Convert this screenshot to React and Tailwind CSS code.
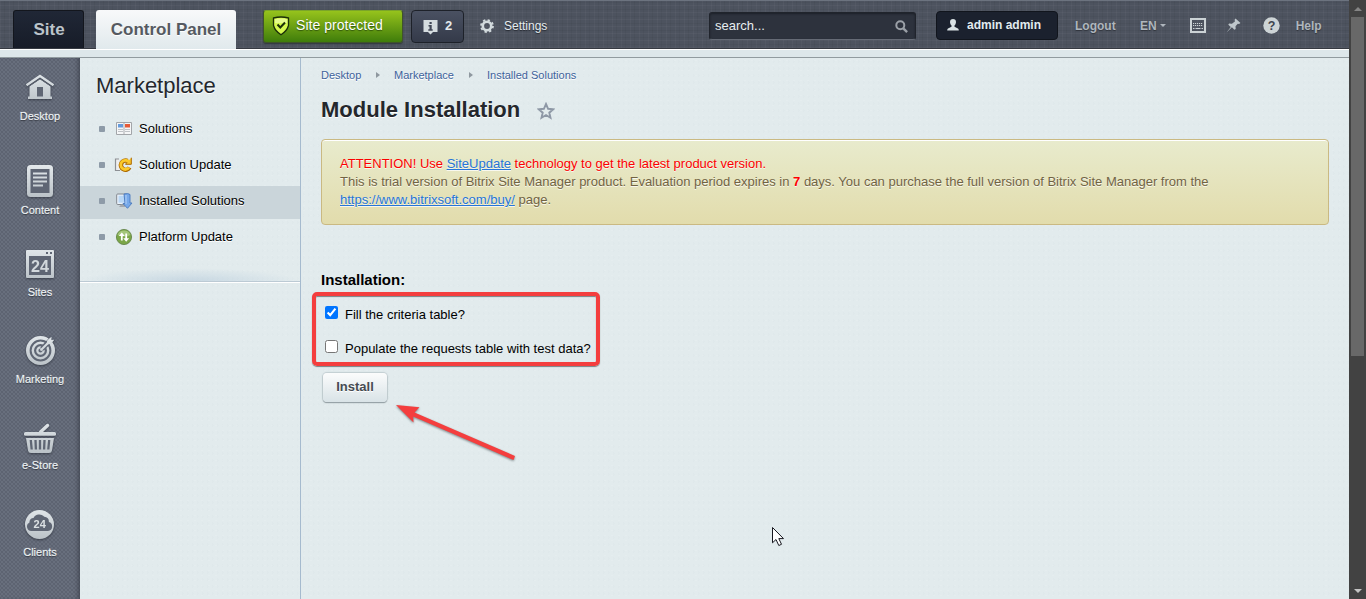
import React from 'react';

const Defs = () => (
  <defs>
    <linearGradient id="metal" x1="0" y1="0" x2="0" y2="40" gradientUnits="userSpaceOnUse">
      <stop offset="0" stopColor="#e6ebee" />
      <stop offset="1" stopColor="#b3bbc1" />
    </linearGradient>
  </defs>
);

const M = 'url(#metal)';
const D = '#5f6674';

const icons = {
  Desktop: (
    <>
      <path d="M6.500 16.200L20 7l13.500 9.200" fill="none" stroke={M} strokeWidth="2.500" />
      <path d="M9.500 17.300L20 10.200l10.500 7.100V27.500H32V30H8v-2.500h1.500z" fill={M} />
      <path d="M8.500 17.600L20 9.700l11.500 7.900" fill="none" stroke={D} strokeWidth="1" />
      <path d="M17 18h6v9.500h-6z" fill={D} />
    </>
  ),
  Content: (
    <>
      <rect x="7" y="2" width="26" height="32" rx="3.500" fill={M} />
      <rect x="10.500" y="6" width="19" height="24" fill={D} />
      <path d="M13 10.500h14M13 14.500h14M13 18.500h14M13 22.500h10" stroke={M} strokeWidth="2" />
    </>
  ),
  Sites: (
    <>
      <rect x="6" y="5" width="28" height="28" rx="1" fill={M} />
      <rect x="9" y="11" width="22" height="19" fill={D} />
      <path d="M26 7h2v2h-2zM30 7h2v2h-2z" fill={D} />
      <text x="20" y="27" textAnchor="middle" fontFamily="Liberation Sans, sans-serif" fontWeight="700" fontSize="17" textLength="18" lengthAdjust="spacingAndGlyphs" fill="#d2d8dc">24</text>
    </>
  ),
  Marketing: (
    <>
      <circle cx="20.500" cy="18.500" r="12.700" fill={D} stroke={M} strokeWidth="3.600" />
      <circle cx="20.500" cy="18.500" r="7.700" fill="none" stroke={M} strokeWidth="2.400" />
      <circle cx="20.500" cy="18.500" r="3.200" fill="none" stroke={M} strokeWidth="2.200" />
      <path d="M22 17L33 5.500" stroke={D} strokeWidth="5" />
      <path d="M20.500 18.500L30 9" stroke={M} strokeWidth="2.200" />
      <path d="M26.500 12.500l.8-4.300L31.500 4.700l-.2 3.200 3-.2-3.500 4.200z" fill={M} />
    </>
  ),
  'e-Store': (
    <>
      <path d="M20.500 14L27.500 7.500" stroke={M} strokeWidth="3.400" strokeLinecap="round" />
      <rect x="4" y="14" width="32" height="3.800" rx="1.500" fill={M} />
      <path d="M6 20h28l-2 12.500q-.4 2.500-3 2.500H11q-2.600 0-3-2.500z" fill={M} />
      <path d="M10.800 22l.9 9.500M15.500 22l.4 9.500M20 22v9.500M24.500 22l-.4 9.500M29.200 22l-.9 9.500" stroke={D} strokeWidth="2.300" />
    </>
  ),
  Clients: (
    <>
      <circle cx="19.500" cy="19.500" r="14.500" fill={M} />
      <path d="M12 26a4.500 4.500 0 0 1-2.500-8.500A4 4 0 0 1 13.500 13a6.500 6.500 0 0 1 10.800-1.200 4.500 4.500 0 0 1 4.500 5.200A4.600 4.600 0 0 1 28 26z" fill={D} />
      <text x="19.700" y="23.300" textAnchor="middle" fontFamily="Liberation Sans, sans-serif" fontWeight="700" fontSize="11" fill="#dce1e4">24</text>
    </>
  ),
};

const Nav = ({ name, gap }) => (
  <div className={`flex flex-col items-center ${gap}`}>
    <svg width="40" height="40" className="drop-shadow-[0_1px_1px_rgba(30,35,45,0.6)]">{icons[name]}</svg>
    <span className="text-[11px] leading-[14px] text-[#edf2f4] [text-shadow:0_1px_1px_#30343d,0_0_1px_#dfe5e8]">{name}</span>
  </div>
);

const menuIcons = {
  Solutions: (
    <>
      <path d="M.5 1.500h15v12H.5z" fill="#f5f6f7" stroke="#a2a5a9" />
      <path d="M2 3h5v3.500H2z" fill="#659bdc" />
      <path d="M9 3h5v3.500H9z" fill="#e55a38" />
      <path d="M2 8.500h5M2 10.500h5M9 8.500h5M9 10.500h5" stroke="#bfc2c6" />
      <path d="M8 2v11" stroke="#a9acb0" />
    </>
  ),
  'Solution Update': (
    <>
      <path d="M3 2H-.5v11.500H4" fill="#eee" stroke="#8d9094" strokeWidth="1.200" />
      <path d="M13.500 10.500A4.600 4.600 0 1 1 11.500 4" fill="none" stroke="#ad6900" strokeWidth="4.400" />
      <path d="M15.300.7v6.600H9.500l1.800-2.200" fill="#f9c52c" stroke="#ad6900" strokeWidth="1" />
      <path d="M13 10.700A4.600 4.600 0 1 1 12.500 4.500" fill="none" stroke="#fbc928" strokeWidth="2.800" />
    </>
  ),
  'Installed Solutions': (
    <>
      <rect x=".7" y="1" width="10.500" height="10.500" rx="1" fill="#e9f1fa" stroke="#83888e" />
      <rect x="2.500" y="2.700" width="7" height="7" fill="#b9d7f5" />
      <path d="M3 14l2-2.500h4V14z" fill="#a4a8ad" />
      <path d="M8 1q4.500-1 6 .5V10h2l-4.500 5.300L7 10.500h2z" fill="#77a9ea" stroke="#4878bd" strokeWidth=".9" />
      <path d="M10 2v9" stroke="#b6d3f7" />
    </>
  ),
  'Platform Update': (
    <>
      <circle cx="8" cy="8" r="7.600" fill="#7ba648" stroke="#5e7f42" strokeWidth=".8" />
      <path d="M1.500 6a7 7 0 0 1 13 0q-6 3-13 0" fill="#a4c67b" />
      <path d="M5.800 11.500V5.500M10.200 4.500V10.500" stroke="#fff" strokeWidth="1.800" />
      <path d="M2.800 7l3-3.500 3 3.500zM7.200 9.200l3 3.500 3-3.500z" fill="#fff" />
    </>
  ),
};

const MenuRow = ({ name, active }) => (
  <div className={`flex h-[33px] mb-[3px] items-center pl-[19px] pb-[3px] ${active ? 'bg-[#cad5da]' : ''}`}>
    <i className="-mt-px size-[6px] rounded-[1px] bg-[#8e9ba8]" />
    <svg width="16" height="16" className="ml-[11px] overflow-visible">{menuIcons[name]}</svg>
    <span className="ml-[7px] text-[13px] leading-4 text-black [text-shadow:0_1px_0_#fff]">{name}</span>
  </div>
);

const Crumb = ({ className }) => <i className={`border-y-[3.500px] border-l-[4px] border-y-transparent border-l-[#8f989f] ${className}`} />;

const Header = () => (
  <header className="flex h-[49px] shrink-0 border-t border-[#6c737f] border-b border-b-[#363a42] bg-[#4d535f] bg-[repeating-linear-gradient(0deg,rgba(255,255,255,0.03)_0_1px,transparent_1px_3px,rgba(0,0,0,0.04)_3px_4px,transparent_4px_7px),repeating-linear-gradient(90deg,rgba(255,255,255,0.03)_0_1px,transparent_1px_4px,rgba(0,0,0,0.04)_4px_5px,transparent_5px_9px)]">
    <div className="ml-[13px] mt-[9px] flex h-[38px] w-[71px] justify-center rounded-t-[3px] border border-b-0 border-[#13161d] bg-linear-to-b from-[#202736] to-[#171c28] pt-[8px] pl-px text-[17px] leading-[22px] font-bold text-[#bcc4ca]">Site</div>
    <div className="ml-3 mt-[9px] flex h-[40px] w-[140px] justify-center rounded-t-[3px] bg-linear-to-b from-[#f8f9fa] to-[#e0e9ec] pt-[9px] text-[17px] leading-[22px] font-bold text-[#555a61] [text-shadow:0_1px_0_#fff]">Control Panel</div>
    <div className="ml-[27px] mt-[9px] flex h-[33px] w-[140px] rounded-[3px] border border-[#40542a] border-t-[#7ba529] bg-linear-to-b from-[#96c31c] to-[#3f7d0b] shadow-[0_1px_1px_#343a40]">
      <svg width="18" height="20" className="ml-2 mt-[5px]" viewBox="0 0 18 20"><path d="M1.500 2Q9 0 16.500 2v7.500Q15 15 9 18.700 3 15 1.500 9.500z" fill="#d5f850" stroke="#1b2f09" strokeWidth="1.300" /><path d="M3 3.200Q9 1.800 15 3.200V7H3z" fill="#effbb5" opacity=".6" /><path d="M5.500 8.500l2.800 3 4.700-5" fill="none" stroke="#1b2f09" strokeWidth="2" /></svg>
      <span className="ml-[6px] mt-[5px] text-[14px] leading-[18px] text-white tracking-[0.04px] [text-shadow:0_1px_1px_#31570a]">Site protected</span>
    </div>
    <div className="ml-2 mt-[9px] flex h-[33px] w-[53px] rounded-[4px] border border-[#1d2129] bg-linear-to-b from-[#4a5162] to-[#343a49]">
      <svg width="15" height="15" className="ml-[11px] mt-[9px]"><path d="M.5 0h14v12H10l-2.500 2.500L5 12H.5z" fill="#d5dcdf" /><path d="M6.500 2h2.200v2H6.500zM5.500 5h3.200v4.200h1v1.500H5.300V9.200h1.200V6.500h-1z" fill="#414756" /></svg>
      <b className="ml-[7px] mt-[7px] text-[13px] leading-4 text-[#e4eaed]">2</b>
    </div>
    <svg width="14" height="14" viewBox="0 0 14 14" className="ml-4 mt-[18px]"><circle cx="7" cy="7" r="4.200" fill="none" stroke="#d2dadd" strokeWidth="2.600" /><circle cx="7" cy="7" r="6" fill="none" stroke="#d2dadd" strokeWidth="1.800" strokeDasharray="2.350" /></svg>
    <span className="ml-[10px] mt-[17px] text-[12px] leading-4 text-[#e6edf0] [text-shadow:0_1px_1px_#252830]">Settings</span>
    <div className="ml-auto mt-[11px] flex h-[28px] w-[207px] justify-between rounded-[3px] border border-[#20242c] border-b-[#656a75] bg-[#2d323d] px-[5px] shadow-[inset_0_1px_2px_#1c2028]">
      <span className="mt-[5px] text-[13px] leading-4 text-[#e7edf0]">search...</span>
      <svg width="13" height="13" viewBox="0 0 13 13" className="mr-[2px] mt-[7px]"><circle cx="5.300" cy="5.300" r="4" fill="none" stroke="#9ba0a7" strokeWidth="2" /><path d="M8.300 8.300l3.800 3.800" stroke="#9ba0a7" strokeWidth="2.400" /></svg>
    </div>
    <div className="ml-5 mt-[10px] flex h-[29px] w-[122px] rounded-[4px] border border-[#11151d] bg-[#1b212e]">
      <svg width="12" height="12" viewBox="0 0 12 12" className="ml-[10px] mt-[7px]"><path d="M6 0q3 0 3 3.200Q8.800 5.500 7.500 6.500v1.300L11 9.500q.8.500.8 2H.2Q.2 10 1 9.500l3.500-1.700V6.500Q3.200 5.500 3 3.200 3 0 6 0" fill="#d9e1e4" /></svg>
      <b className="ml-[8px] mt-[5px] text-[12px] leading-4 text-[#e2ebef]">admin admin</b>
    </div>
    <div className="flex w-[291px] pt-[17px] text-[12px] leading-4 font-bold text-[#afb6bd] [text-shadow:0_1px_1px_#30343c]">
      <span className="ml-[17px] w-[65px]">Logout</span>
      <span>EN</span>
      <i className="ml-[3px] mt-[6px] h-[3px] border-x-[3px] border-t-[3px] border-x-transparent border-t-[#afb6bd]" />
      <svg width="16" height="15" className="ml-[24px]"><path d="M1 1h14v13H1z" fill="none" stroke="#cbd2d5" strokeWidth="2" /><path d="M3 5.500h10M3 7.500h10" stroke="#cbd2d5" strokeDasharray="1.200 .8" strokeWidth="1" /><path d="M3 10.500h1.500M5.500 10.500h5M11.500 10.500H13" stroke="#cbd2d5" strokeWidth="1.200" /></svg>
      <svg width="15" height="15" viewBox="0 0 15 15" className="ml-[20px]"><path d="M9.500.5l5 4.500-1.500 1-1.200-.3-2.300 2.600.2 2.800-1.300.7-2.500-2.500L.5 14.500 4.800 9 2.300 6.800 3 5.500l2.900.2 3-2.300-.3-1.600z" fill="#bec6cb" /></svg>
      <svg width="17" height="17" className="ml-[22px] -mt-px"><circle cx="8.500" cy="8.500" r="8.200" fill="#cdd4d6" /><text x="8.500" y="13" textAnchor="middle" fontSize="12.500" fontWeight="700" fill="#3e444f" className="[text-shadow:none]">?</text></svg>
      <span className="ml-[16px]">Help</span>
    </div>
  </header>
);

const Texture = 'bg-[#e2ebed] bg-[radial-gradient(rgba(255,255,255,0.10)_1px,transparent_1px),radial-gradient(rgba(180,200,207,0.06)_1px,transparent_1px)] bg-[size:7px_5px,5px_7px]';

export default function App() {
  return (
    <div className="relative flex h-[599px] w-[1366px] overflow-hidden font-['Liberation_Sans',Arial,sans-serif]">
      <svg width="0" height="0" className="absolute"><Defs /></svg>
      <div className="flex w-[1349px] flex-col">
        <Header />
        <div className="h-[9px] shrink-0 border-t border-b border-t-white border-b-[#919b9f] bg-[#dde7ea]" />
        <div className="flex min-h-0 flex-1">
          <nav className="flex w-20 shrink-0 flex-col bg-[#686f7d] bg-[radial-gradient(circle,rgba(60,66,78,0.26)_0.7px,transparent_1px),radial-gradient(circle,rgba(60,66,78,0.26)_0.7px,transparent_1px)] bg-[size:4px_4px,4px_4px] bg-[position:0_0,2px_2px] shadow-[inset_-4px_0_4px_-2px_rgba(45,50,60,0.55)]">
            <Nav name="Desktop" gap="mt-[11px]" />
            <Nav name="Content" gap="mt-10" />
            <Nav name="Sites" gap="mt-7" />
            <Nav name="Marketing" gap="mt-[33px]" />
            <Nav name="e-Store" gap="mt-8" />
            <Nav name="Clients" gap="mt-[33px]" />
          </nav>
          <aside className={`w-[221px] shrink-0 border-r border-[#a5bace] ${Texture}`}>
            <h2 className="ml-4 mt-[14px] mb-[12px] text-[22px] leading-[28px] text-[#23272d] [text-shadow:0_1px_0_#fff]">Marketplace</h2>
            <div className="pt-[2px]">
              <MenuRow name="Solutions" />
              <MenuRow name="Solution Update" />
              <MenuRow name="Installed Solutions" active />
              <MenuRow name="Platform Update" />
            </div>
            <div className="mt-[13px] h-[14px] border-b border-[#bccad4] bg-[radial-gradient(ellipse_at_50%_100%,rgba(174,197,216,0.5),transparent_70%)] shadow-[0_1px_0_#fff]" />
          </aside>
          <main className={`min-w-0 flex-1 pl-5 pr-5 ${Texture}`}>
            <div className="mt-[9px] flex h-4 items-center text-[11px] leading-4 text-[#3d629b] [text-shadow:0_1px_0_#fff]">
              <span className="w-[55px]">Desktop</span><Crumb className="mr-[14px]" /><span className="w-[75px]">Marketplace</span><Crumb className="mr-[14px]" /><span>Installed Solutions</span>
            </div>
            <div className="mt-[13px] flex h-[28px]">
              <h1 className="text-[22px] leading-[28px] font-bold text-[#24272c] [text-shadow:0_1px_0_#fff]">Module Installation</h1>
              <svg width="18" height="18" viewBox="0 0 18 18" className="ml-[17px] mt-[6px]"><path d="M9 2l2.100 4.800 5.100.5-3.900 3.400 1.200 5L9 13l-4.500 2.700 1.200-5L1.800 7.300l5.100-.5z" fill="none" stroke="#8e98a6" strokeWidth="1.900" /></svg>
            </div>
            <div className="mt-[15px] h-[86px] rounded-[4px] border border-[#cab982] bg-linear-to-b from-[#e8ebcd] to-[#e2dcac] pl-[18px] pt-[15px] text-[13px] leading-[18px] text-[#716343] shadow-[inset_0_1px_0_#fff] [text-shadow:0_1px_0_rgba(255,255,255,0.75)]">
              <p className="text-[#fb0000]">ATTENTION! Use <a className="text-[#2675d7] underline">SiteUpdate</a> technology to get the latest product version.</p>
              <p>This is trial version of Bitrix Site Manager product. Evaluation period expires in <b className="text-[#f00]">7</b> days. You can purchase the full version of Bitrix Site Manager from the</p>
              <p><a className="text-[#2675d7] underline">https://www.bitrixsoft.com/buy/</a> page.</p>
            </div>
            <div className="mt-[46px] text-[15px] leading-[18px] font-bold text-black">Installation:</div>
            <div className="-ml-[9px] mt-[3px] h-[74px] w-[288px] whitespace-nowrap rounded-[5px] border-4 border-[#f43e3e] pl-[9px] pt-[10px] text-[13px] leading-4 text-black shadow-[0_1px_1px_#788184,inset_0_1px_1px_#788184]">
              <label className="flex h-4 items-start"><input type="checkbox" defaultChecked className="size-[13px]" /><span className="ml-[7px] mt-px">Fill the criteria table?</span></label>
              <label className="mt-[18px] flex h-4 items-start"><input type="checkbox" className="size-[13px]" /><span className="ml-[7px] mt-px">Populate the requests table with test data?</span></label>
            </div>
            <button className="ml-[2px] mt-[7px] block h-[29px] w-[64px] rounded-[4px] bg-linear-to-b from-[#fbfcfc] to-[#d9e3e7] pb-px text-[13px] leading-[16px] font-bold text-[#464b52] shadow-[0_0_1px_1px_rgba(170,182,187,0.55),0_1px_1px_#7d888c] [text-shadow:0_1px_0_#fff]">Install</button>
          </main>
        </div>
      </div>
      <div className="flex w-[17px] flex-col items-center justify-between bg-[#424242] pt-[7px] pb-[6px]">
        <i className="border-x-4 border-b-4 border-x-transparent border-b-[#858585]" />
        <div className="mt-[6px] mr-px h-[339px] w-[13px] shrink-0 bg-[#686868]" />
        <i className="mt-auto border-x-4 border-t-4 border-x-transparent border-t-[#c4c4c4]" />
      </div>
      <svg width="122" height="58" className="absolute left-[395px] top-[403px] drop-shadow-[0_1px_1px_#788184]"><path d="M1 2l23.500 2.200-5 5.300L120 53l-1.500 4L18.200 13.600l.3 5.900z" fill="#f43e3e" /></svg>
      <svg width="14" height="21" className="absolute left-[771px] top-[526px]"><path d="M1.500 1.500v15.300l3.500-3.300 2.800 6 2.700-1.200-2.700-5.700h4.700z" fill="#fff" stroke="#17181f" strokeWidth="1" /></svg>
    </div>
  );
}
